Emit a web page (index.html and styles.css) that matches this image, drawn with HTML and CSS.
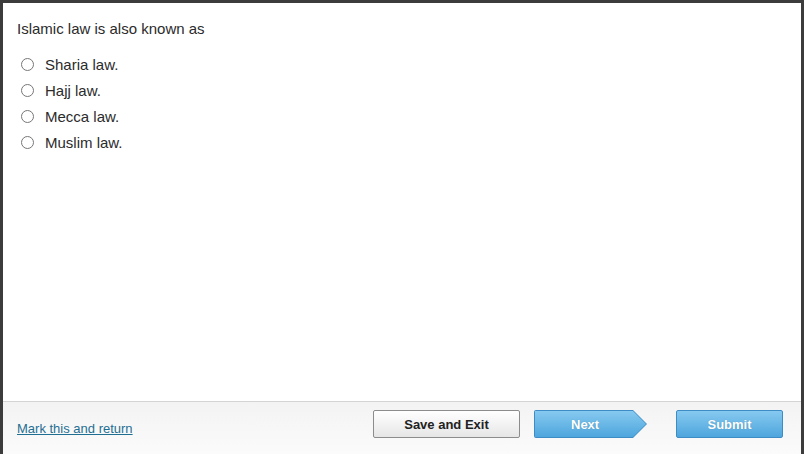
FILE: index.html
```html
<!DOCTYPE html>
<html lang="en">
<head>
  <meta charset="UTF-8">
  <title>Question</title>
  <link rel="stylesheet" href="styles.css">
</head>
<body>
  <div class="frame">
    <div class="question-area">
      <p class="question">Islamic law is also known as</p>
      <ul class="choices">
        <li><label><input type="radio" name="q1"> <span>Sharia law.</span></label></li>
        <li><label><input type="radio" name="q1"> <span>Hajj law.</span></label></li>
        <li><label><input type="radio" name="q1"> <span>Mecca law.</span></label></li>
        <li><label><input type="radio" name="q1"> <span>Muslim law.</span></label></li>
      </ul>
    </div>

    <!-- bottom bar -->
    <div class="footer">
      <a class="mark-link" href="#">Mark this and return</a>
      <div class="btn-group">
        <button class="btn btn-plain">Save and Exit</button>
        <div class="btn-next">
          <div class="btn-next-inner">Next</div>
        </div>
        <button class="btn btn-blue">Submit</button>
      </div>
    </div>
  </div>
</body>
</html>
```

FILE: styles.css
```css
* {
  margin: 0;
  padding: 0;
  box-sizing: border-box;
}
body {
  font-family: "Liberation Sans", Arial, sans-serif;
  color: #2b2b2b;
  background: #3c3c3c;
}
.frame {
  height: 451px;
  margin: 3px 3px 0 3px;
  background: #fff;
  display: flex;
  flex-direction: column;
}

.question-area {
  flex: 1;
  padding: 17px 14px 0;
}
.question {
  font-size: 15px;
  line-height: 18px;
  margin-bottom: 18px;
}
.choices {
  list-style: none;
}
.choices li {
  height: 26px;
}
.choices label {
  display: flex;
  align-items: center;
  font-size: 15px;
  line-height: 18px;
}
.choices input {
  width: 13px;
  height: 13px;
  margin: 0 11px 0 4px;
  position: relative;
  top: -1px;
}

/* footer */
.footer {
  height: 53px;
  border-top: 1px solid #d4d4d4;
  background: linear-gradient(#f3f3f3, #fbfbfb);
  display: flex;
  align-items: flex-start;
  justify-content: space-between;
  padding: 8px 18px 0 14px;
}
.mark-link {
  font-size: 13px;
  color: #1f6f93;
  margin-top: 11px;
}
.btn-group {
  display: flex;
  align-items: center;
}
.btn {
  height: 28px;
  font-family: inherit;
  font-size: 13px;
  font-weight: bold;
  border-radius: 2px;
  cursor: pointer;
}
.btn-plain {
  width: 147px;
  color: #222;
  border: 1px solid #8c8c8c;
  background: linear-gradient(#ffffff, #e6e6e6);
}
.btn-blue {
  width: 107px;
  margin-left: 29px;
  color: #fff;
  text-shadow: 0 0 1px rgba(0, 0, 0, 0.25);
  border: 1px solid #3e8cc6;
  background: linear-gradient(#86c9f0, #4ea6dd);
}
.btn-next {
  width: 113px;
  height: 28px;
  margin-left: 14px;
  padding: 1px;
  background: #3e8cc6;
  clip-path: polygon(0 0, 99px 0, 113px 14px, 99px 28px, 0 28px);
  border-radius: 2px 0 0 2px;
}
.btn-next-inner {
  height: 26px;
  width: 111px;
  display: flex;
  align-items: center;
  padding-left: 36px;
  font-size: 13px;
  font-weight: bold;
  color: #fff;
  text-shadow: 0 0 1px rgba(0, 0, 0, 0.25);
  background: linear-gradient(#86c9f0, #4ea6dd);
  clip-path: polygon(0 0, 98px 0, 111px 13px, 98px 26px, 0 26px);
}
```
